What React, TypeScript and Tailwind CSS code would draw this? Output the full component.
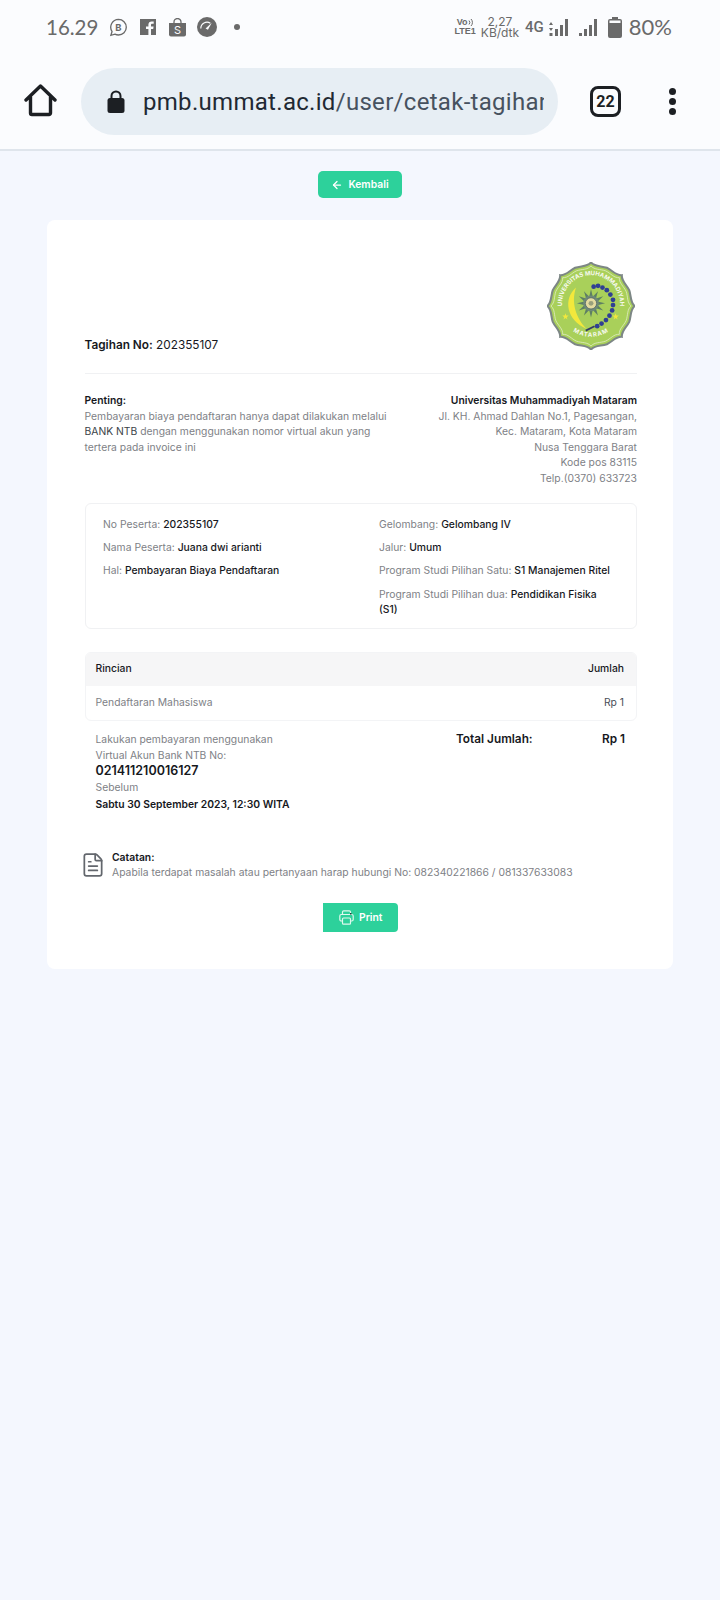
import { ArrowLeft, FileText } from 'lucide-react';

const Logo = () => {
  // scalloped badge outline, 8 lobes with a small point between them
  const pts: string[] = [];
  const n = 8;
  const p = (t: number, r: number) => `${(50 + Math.cos(t) * r).toFixed(1)} ${(50 + Math.sin(t) * r).toFixed(1)}`;
  for (let i = 0; i < n; i++) {
    const a = (i / n) * Math.PI * 2 - Math.PI / 2;
    const b = ((i + 0.5) / n) * Math.PI * 2 - Math.PI / 2;
    const c = ((i + 1) / n) * Math.PI * 2 - Math.PI / 2;
    if (i === 0) pts.push(`M${p(a, 49.5)}`);
    pts.push(`C${p(a + 0.1, 44.5)} ${p(b - 0.15, 47.2)} ${p(b, 47)}`);
    pts.push(`C${p(b + 0.15, 47.2)} ${p(c - 0.1, 44.5)} ${p(c, 49.5)}`);
  }
  const d = pts.join(' ') + 'Z';
  return (
    <svg width="88" height="88" viewBox="0 0 100 100">
      <path d={d} fill="#a9d05a" stroke="#7d8785" strokeWidth="2.400" />
      <path d={d} fill="none" stroke="#eef3df" strokeWidth="0.8" transform="translate(4 4) scale(0.92)" />
      <defs>
        <path id="arcTop" d="M19 59.300 A33 33 0 1 1 81 59.300" />
        <path id="arcBot" d="M21.700 71.800 A37 37 0 0 0 78.300 71.800" />
      </defs>
      <text fontSize="6.800" fontWeight="700" fill="#f6f9ee" fontFamily="Inter, sans-serif">
        <textPath href="#arcTop" startOffset="50%" textAnchor="middle">UNIVERSITAS MUHAMMADIYAH</textPath>
      </text>
      <text fontSize="6.800" fontWeight="700" fill="#f6f9ee" fontFamily="Inter, sans-serif" letterSpacing="1">
        <textPath href="#arcBot" startOffset="50%" textAnchor="middle">MATARAM</textPath>
      </text>
      {/* padi */}
      <path d="M33 29 C18 42 22 66 45 76 C33 64 27 46 33 29Z" fill="#f3e83c" />
      {/* kapas */}
      <g fill="#2f3f93">
        {[[53, 28], [58, 27], [63, 29], [68, 32], [72, 37], [75, 43], [75, 49], [74, 55], [71, 61], [67, 66], [62, 70], [57, 73]].map(([x, y], i) => (
          <circle key={i} cx={x} cy={y} r="2.700" />
        ))}
      </g>
      <path d="M44 78 L54 73" stroke="#333b66" strokeWidth="2" />
      {/* matahari */}
      <g fill="#5e7f63">
        {Array.from({ length: 12 }).map((_, i) => (
          <polygon key={i} points="50,31 52.400,41 47.600,41" transform={`rotate(${i * 30} 50 47)`} />
        ))}
      </g>
      <circle cx="50" cy="47" r="9" fill="#6f8a76" />
      <circle cx="50" cy="47" r="6.400" fill="#e4dba0" stroke="#4c5f66" strokeWidth="0.8" />
      <circle cx="50" cy="47" r="2.800" fill="#9aa07c" />
      <polygon points="20,68 21,71 24,71 21.600,73 22.500,76 20,74 17.500,76 18.400,73 16,71 19,71" fill="#f3e83c" transform="translate(3 -3) scale(0.9)" />
      <polygon points="80,68 81,71 84,71 81.600,73 82.500,76 80,74 77.500,76 78.400,73 76,71 79,71" fill="#f3e83c" transform="translate(6 -3) scale(0.9)" />
    </svg>
  );
};

const StatusBar = () => (
  <div className="flex h-[54px] items-center justify-between pl-[46px] pr-[48px] text-[#6a6a6a]">
    <div className="flex items-center">
      <span className="font-['Lato',sans-serif] text-[20.500px] leading-none">16.29</span>
      <svg className="ml-[11px]" width="19" height="19" viewBox="0 0 20 20" fill="none">
        <path d="M10 1.500a8.200 8.200 0 0 1 0 16.400c-1.400 0-2.600-.3-3.800-.9l-4.200 1.200 1.200-4A8.200 8.200 0 0 1 10 1.500Z" stroke="#6a6a6a" strokeWidth="1.400" />
        <text x="10" y="13.500" textAnchor="middle" fontSize="10" fontWeight="700" fill="#6a6a6a" fontFamily="Inter, sans-serif">B</text>
      </svg>
      <svg className="ml-[12px]" width="16" height="16" viewBox="0 0 16 16">
        <path d="M0 0h16v16h-5v-6h2.200l.4-2.600H11V6c0-.8.3-1.200 1.300-1.200h1.400V2.500c-.5 0-1.200-.1-2-.1-2 0-3.300 1.200-3.300 3.300v1.700H6V10h2.400v6H0Z" fill="#6a6a6a" />
      </svg>
      <svg className="ml-[13px]" width="17" height="19" viewBox="0 0 17 19">
        <path d="M0 5h17v11.500a2 2 0 0 1-2 2H2a2 2 0 0 1-2-2V5Z" fill="#6a6a6a" />
        <path d="M5 6V4a3.500 3.500 0 0 1 7 0v2" stroke="#6a6a6a" strokeWidth="1.300" fill="none" />
        <text x="8.500" y="16" textAnchor="middle" fontSize="11" fill="#fbfcfe" fontFamily="Inter, sans-serif">S</text>
      </svg>
      <svg className="ml-[11px]" width="20" height="20" viewBox="0 0 21 21">
        <circle cx="10.500" cy="10.500" r="10.500" fill="#6a6a6a" />
        <path d="M4 12a6.500 6.500 0 0 1 10-5.500" stroke="#fbfcfe" strokeWidth="1.200" fill="none" />
        <path d="M9 12l6.500-6-4 7.500Z" fill="#fbfcfe" />
      </svg>
      <span className="ml-[17px] h-[6px] w-[6px] rounded-full bg-[#6a6a6a]" />
    </div>
    <div className="flex items-center">
      <div className="flex flex-col items-center font-['Liberation_Sans',sans-serif] text-[9px] font-bold leading-[9px]">
        <span className="flex items-center">
          Vo
          <svg width="6" height="9" viewBox="0 0 6 9" fill="none" stroke="#6a6a6a" strokeWidth="1">
            <path d="M1 2.500a3 3 0 0 1 0 4M3 1a5 5 0 0 1 0 7" />
          </svg>
        </span>
        <span>LTE1</span>
      </div>
      <div className="ml-[5px] flex flex-col items-center font-['Inter',sans-serif] text-[12px] leading-[11.500px]">
        <span>2,27</span>
        <span>KB/dtk</span>
      </div>
      <span className="ml-[6px] font-['Roboto',sans-serif] text-[15px] font-medium">4G</span>
      <svg className="ml-[5px]" width="20" height="17" viewBox="0 0 20 17" fill="#6a6a6a">
        <path d="M2 3 4 6H0ZM0 9h4l-2 3Z" />
        <rect x="0.500" y="14" width="3" height="3" />
        <rect x="6" y="10" width="3" height="7" />
        <rect x="11" y="6" width="3" height="11" />
        <rect x="16" y="0" width="3" height="17" />
      </svg>
      <svg className="ml-[10px]" width="19" height="17" viewBox="0 0 19 17" fill="#6a6a6a">
        <rect x="0" y="14" width="3" height="3" />
        <rect x="5" y="10" width="3" height="7" />
        <rect x="10" y="6" width="3" height="11" />
        <rect x="15" y="0" width="3" height="17" />
      </svg>
      <svg className="ml-[10px]" width="14" height="21" viewBox="0 0 14 21">
        <path d="M4 0h6v2h2a2 2 0 0 1 2 2v15a2 2 0 0 1-2 2H2a2 2 0 0 1-2-2V4a2 2 0 0 1 2-2h2Z" fill="#6a6a6a" />
        <rect x="1.500" y="3.500" width="11" height="2.500" fill="#fbfcfe" />
      </svg>
      <span className="ml-[7px] font-['Lato',sans-serif] text-[22px] leading-none">80%</span>
    </div>
  </div>
);

const BrowserBar = () => (
  <div className="flex h-[97px] items-start border-b-2 border-[#dfe5ec] pt-[14px]">
    <svg className="ml-[24px] mt-[16px]" width="33" height="33" viewBox="0 0 33 33" fill="none">
      <path d="M2 16 16.500 2 31 16M6.500 13v16a1.500 1.500 0 0 0 1.500 1.500h17a1.500 1.500 0 0 0 1.500-1.500V13" stroke="#1c1f23" strokeWidth="3.400" strokeLinecap="round" strokeLinejoin="round" />
    </svg>
    <div className="ml-[24px] flex h-[67px] w-[477px] items-center rounded-full bg-[#e7eef4] pl-[26px] pr-[14px]">
      <svg width="18" height="23" viewBox="0 0 18 23" className="shrink-0">
        <path d="M4.500 9V6a4.500 4.500 0 0 1 9 0v3" stroke="#1c1f23" strokeWidth="2" fill="none" />
        <rect x="0.500" y="8" width="17" height="15" rx="2.500" fill="#1c1f23" />
      </svg>
      <div className="ml-[18px] overflow-hidden whitespace-nowrap font-['Roboto',sans-serif] text-[24px] tracking-[0.3px] text-[#1f2933]">
        pmb.ummat.ac.id<span className="text-[#47525f]">/user/cetak-tagihan/202355107</span>
      </div>
    </div>
    <div className="ml-[32px] mt-[18px] flex h-[31px] w-[31px] items-center justify-center rounded-[8px] border-[3.500px] border-[#1c1f23] font-['Roboto',sans-serif] text-[16px] font-bold text-[#1c1f23]">
      22
    </div>
    <div className="ml-[48px] mt-[20px] flex flex-col gap-[3px]">
      <span className="h-[7px] w-[7px] rounded-full bg-[#1c1f23]" />
      <span className="h-[7px] w-[7px] rounded-full bg-[#1c1f23]" />
      <span className="h-[7px] w-[7px] rounded-full bg-[#1c1f23]" />
    </div>
  </div>
);

const Field = ({ label, value }: { label: string; value: string }) => (
  <p className="mb-[7.800px] leading-[15.600px]">
    {label} <span className="font-medium text-[#16181d]">{value}</span>
  </p>
);

export default function App() {
  return (
    <div className="min-h-[1600px] bg-[#f4f7fe] font-['Inter',sans-serif]">
      <div className="bg-[#fbfcfe]">
        <StatusBar />
        <BrowserBar />
      </div>

      <div className="flex justify-center pt-[20px]">
        <button className="flex h-[27px] w-[84px] items-center justify-center gap-[5px] rounded-[5px] bg-[#2dd19b] text-[10.350px] font-semibold text-white">
          <ArrowLeft size={12} strokeWidth={2.500} />
          Kembali
        </button>
      </div>

      <div className="mx-[47px] mt-[22px] h-[749px] rounded-[8px] bg-white pl-[37.500px] pr-[36px] pt-[42px]">
        <div className="flex items-end justify-between border-b border-[#f0f1f3] pb-[23px]">
          <p className="mb-[-4px] text-[11.800px] leading-[17px] text-[#16181d]">
            <span className="font-semibold">Tagihan No:</span> 202355107
          </p>
          <div className="mr-[2px] h-[88px]">
            <Logo />
          </div>
        </div>

        <div className="mt-[19px] flex justify-between text-[10.350px] leading-[15.600px] text-[#7e8186]">
          <div className="w-[305px]">
            <p className="font-semibold text-[#16181d]">Penting:</p>
            <p>
              Pembayaran biaya pendaftaran hanya dapat dilakukan melalui <span className="text-[#3a3f46]">BANK NTB</span> dengan menggunakan nomor virtual akun yang tertera pada invoice ini
            </p>
          </div>
          <div className="text-right">
            <p className="font-semibold text-[#16181d]">Universitas Muhammadiyah Mataram</p>
            <p>Jl. KH. Ahmad Dahlan No.1, Pagesangan,</p>
            <p>Kec. Mataram, Kota Mataram</p>
            <p>Nusa Tenggara Barat</p>
            <p>Kode pos 83115</p>
            <p>Telp.(0370) 633723</p>
          </div>
        </div>

        <div className="mt-[16px] flex h-[126px] rounded-[6px] border border-[#f0f1f3] pl-[17.500px] pt-[13px] text-[10.350px] text-[#7e8186]">
          <div className="w-[276px]">
            <Field label="No Peserta:" value="202355107" />
            <Field label="Nama Peserta:" value="Juana dwi arianti" />
            <Field label="Hal:" value="Pembayaran Biaya Pendaftaran" />
          </div>
          <div className="w-[235px]">
            <Field label="Gelombang:" value="Gelombang IV" />
            <Field label="Jalur:" value="Umum" />
            <Field label="Program Studi Pilihan Satu:" value="S1 Manajemen Ritel" />
            <Field label="Program Studi Pilihan dua:" value="Pendidikan Fisika (S1)" />
          </div>
        </div>

        <div className="mt-[23px] overflow-hidden rounded-[6px] border border-[#f3f4f6] text-[10.350px]">
          <div className="flex h-[33px] items-center justify-between bg-[#f6f6f7] pl-[10px] pr-[12px] font-medium text-[#16181d]">
            <span>Rincian</span>
            <span>Jumlah</span>
          </div>
          <div className="flex h-[34px] items-center justify-between pl-[10px] pr-[12px] text-[#7e8186]">
            <span>Pendaftaran Mahasiswa</span>
            <span className="text-[#4a4f57]">Rp 1</span>
          </div>
        </div>

        <div className="mt-[10px] flex justify-between pl-[11px] pr-[12px]">
          <div className="text-[10.350px] leading-[16.300px] text-[#7e8186]">
            <p>Lakukan pembayaran menggunakan</p>
            <p>Virtual Akun Bank NTB No:</p>
            <p className="text-[12.500px] font-semibold text-[#16181d]">021411210016127</p>
            <p>Sebelum</p>
            <p className="font-semibold text-[#16181d]">Sabtu 30 September 2023, 12:30 WITA</p>
          </div>
          <div className="flex w-[169px] justify-between text-[11.800px] font-semibold leading-[16px] text-[#16181d]">
            <span>Total Jumlah:</span>
            <span>Rp 1</span>
          </div>
        </div>

        <div className="mt-[37.500px] flex items-center">
          <FileText size={26} strokeWidth={1.600} className="ml-[-5px] text-[#63676d]" />
          <div className="ml-[6.500px] text-[10.350px] leading-[15.600px]">
            <p className="font-semibold text-[#16181d]">Catatan:</p>
            <p className="text-[#7e8186]">Apabila terdapat masalah atau pertanyaan harap hubungi No: 082340221866 / 081337633083</p>
          </div>
        </div>

        <div className="mt-[22.500px] flex justify-center">
          <button className="flex h-[29px] w-[75px] items-center justify-center gap-[5px] rounded-r-[4px] bg-[#2dd19b] text-[10.350px] font-semibold text-white">
            <svg width="15" height="15" viewBox="0 0 15 15" fill="none" stroke="#dff8ee" strokeWidth="1.200">
              <path d="M3.500 4.500V2a1.200 1.200 0 0 1 1.200-1.200h5.600A1.200 1.200 0 0 1 11.500 2v2.500" />
              <rect x="0.800" y="4.500" width="13.400" height="6.500" rx="1.500" />
              <rect x="3.500" y="8" width="8" height="6.200" rx="1" fill="#2dd19b" />
              <rect x="11" y="3" width="1.500" height="1.500" fill="#1c3d33" stroke="none" />
            </svg>
            Print
          </button>
        </div>
      </div>
    </div>
  );
}
